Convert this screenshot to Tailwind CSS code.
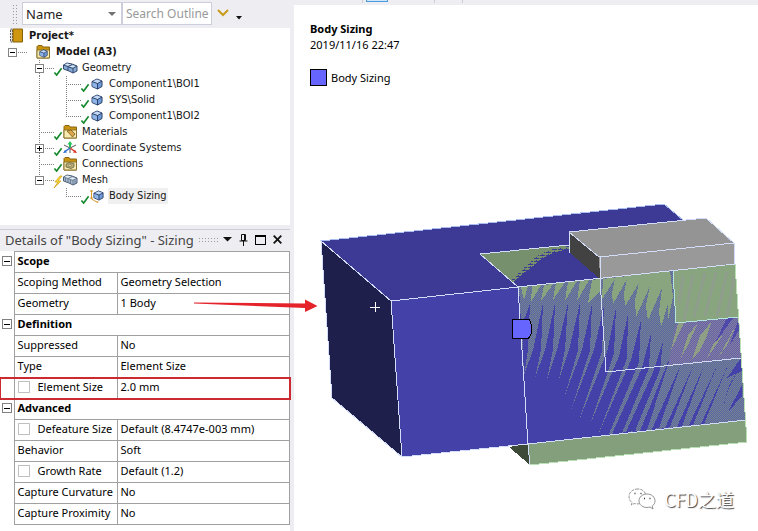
<!DOCTYPE html>
<html lang="en">
<head>
<meta charset="utf-8">
<title>Project - Body Sizing</title>
<script src="https://cdn.jsdelivr.net/npm/@tailwindcss/browser@4"></script>
</head>
<body class="bg-white text-black font-['Noto_Sans','Open_Sans',sans-serif]">
<svg class="hidden" aria-hidden="true">
  <symbol id="check" viewBox="0 0 10 10"><path d="M1 6l2.500 3L9 1.500" fill="none" stroke="#15892c" stroke-width="1.800"/></symbol>
  <symbol id="cube" viewBox="0 0 12 12"><path d="M1 3.500 6 1l5 2v5.500L6.500 11 1 8.500z" fill="#6f9bd8" stroke="#2d4269"/><path d="M1.500 3.500 6 1.500l4.500 1.700L6.500 5.500z" fill="#c5daf5"/><path d="M6.500 5.500v5L1.500 8.200V4z" fill="#8fb5e8"/><path d="M1 3.500l5.500 2L11 3M6.500 5.500V11" fill="none" stroke="#2d4269"/></symbol>
  <symbol id="cubes" viewBox="0 0 15 12"><path d="M.5 3 4 1l5 1 5 2v5l-4 2-4-2-5.500-2z" fill="#86abd9" stroke="#35496b"/><path d="M1 3.200 4 1.500l4.500 1L5 4.500zM6 5l3-1.700L13.500 4.500 10 6z" fill="#d5e4f6"/><path d="M.5 3 5 4.500V8.500M5 4.500l4-2M5.500 5 10 6.300V11M10 6.300 14 4" fill="none" stroke="#35496b"/></symbol>
  <symbol id="meshes" viewBox="0 0 15 12"><path d="M.5 3 4 1l5 1 5 2v5l-4 2-4-2-5.500-2z" fill="#a9bccf" stroke="#4a5c72"/><path d="M1 3.200 4 1.500l4.500 1L5 4.500zM6 5l3-1.700L13.500 4.500 10 6z" fill="#e3ebf2"/><path d="M.5 3 5 4.500V8.500M5 4.500l4-2M5.500 5 10 6.300V11M10 6.300 14 4M2.500 4v4M7.500 6v4M12 5.500V10" fill="none" stroke="#5d7088" stroke-width=".8"/></symbol>
  <symbol id="folder" viewBox="0 0 15 14"><path d="M1 3V1.500L2 .5h4l1 1.500h6.500V13H1z" fill="#c8930f" stroke="#8a6410"/><path d="M1 5h12.500v8H1z" fill="#f6eab0" stroke="#8a7430"/></symbol>
</svg>

<div class="flex min-h-screen items-stretch bg-[#eeeef2]">
  <aside class="flex w-[290px] shrink-0 flex-col" aria-label="Outline and details">
    <form class="flex h-7 items-start pl-3" aria-label="Outline filter">
      <span class="mt-1 mr-1 h-[20px] w-1.5 bg-[radial-gradient(#9b9ba0_30%,transparent_35%)] bg-[size:3px_3px]"></span>
      <div class="flex h-[23px] w-[100px] items-center border border-[#cccedb] bg-white mt-0.5">
        <select id="by" aria-label="Filter by" class="w-full appearance-none bg-transparent pl-[3px] text-[13px] leading-5 text-[#222]"><option>Name</option></select>
        <svg class="mr-1 h-1 w-[9px] shrink-0" viewBox="0 0 9 4"><path d="M0 0h8L4 4z" fill="#717171"/></svg>
      </div>
      <input id="q" type="text" aria-label="Search Outline" placeholder="Search Outline" class="mt-0.5 h-[23px] w-[90px] border border-[#cccedb] bg-white pl-[3px] text-[12px] text-[#777] placeholder:text-[#999]">
      <button type="button" aria-label="Search" class="mt-2 ml-[5px]"><svg class="h-[9px] w-3" viewBox="0 0 12 9"><path d="M1 2l5 5 5-5" fill="none" stroke="#c99b1d" stroke-width="2"/></svg></button>
      <button type="button" aria-label="More" class="mt-4 ml-[7px]"><svg class="block h-1 w-1.5" viewBox="0 0 6 4"><path d="M0 0h6L3 3.500z" fill="#111"/></svg></button>
    </form>

    <ul class="h-[197px] bg-white text-[11px] leading-4 text-[#161616] font-['DejaVu_Sans_Condensed','Noto_Sans',sans-serif] [&>li]:flex [&>li]:h-4 [&>li]:items-center" aria-label="Outline">
      <li class="font-bold"><svg class="mr-[5px] ml-[9px] h-4 w-[15px]" viewBox="0 0 15 16"><path d="M1.500 1h2v13h-2z" fill="#ddd" stroke="#333" stroke-width=".8" stroke-dasharray="2 1"/><path d="M4 1h9.500v13H4z" fill="#cf970f" stroke="#87600b"/></svg>Project*</li>
      <li class="font-bold">
        <button type="button" aria-label="Collapse Model" class="ml-2 size-[9px] shrink-0 border border-[#848484] bg-white"><svg class="block size-[7px]" viewBox="0 0 7 7"><path d="M1 3h5v1H1z"/></svg></button>
        <svg class="mr-[5px] h-4 w-[34px]" viewBox="17 0 34 16"><path d="M18 8.500h10" stroke="#808080" stroke-dasharray="1 1"/><use href="#folder" x="36" y="1" width="15" height="14"/><use href="#cube" x="39" y="5" width="9" height="9"/></svg>Model (A3)</li>
      <li>
        <svg class="h-4 w-[35px]"></svg>
        <button type="button" aria-label="Collapse Geometry" class="size-[9px] shrink-0 border border-[#848484] bg-white"><svg class="block size-[7px]" viewBox="0 0 7 7"><path d="M1 3h5v1H1z"/></svg></button>
        <svg class="mr-1 h-4 w-[34px] overflow-visible" viewBox="44 0 34 16"><path d="M39.500 0v4M39.500 13v3M45 8.500h9" stroke="#808080" stroke-dasharray="1 1"/><use href="#check" x="53" y="7" width="10" height="9"/><use href="#cubes" x="63" y="2" width="15" height="12"/></svg>Geometry</li>
      <li><svg class="mr-1.5 h-4 w-[103px]" viewBox="0 0 103 16"><path d="M39.500 0v16M66.500 0v16M66 8.500h15" stroke="#808080" stroke-dasharray="1 1"/><use href="#check" x="80" y="7" width="10" height="9"/><use href="#cube" x="91" y="2" width="12" height="12"/></svg>Component1\BOI1</li>
      <li><svg class="mr-1.5 h-4 w-[103px]" viewBox="0 0 103 16"><path d="M39.500 0v16M66.500 0v16M66 8.500h15" stroke="#808080" stroke-dasharray="1 1"/><use href="#check" x="80" y="7" width="10" height="9"/><use href="#cube" x="91" y="2" width="12" height="12"/></svg>SYS\Solid</li>
      <li><svg class="mr-1.5 h-4 w-[103px]" viewBox="0 0 103 16"><path d="M39.500 0v16M66.500 0v8M66 8.500h15" stroke="#808080" stroke-dasharray="1 1"/><use href="#check" x="80" y="7" width="10" height="9"/><use href="#cube" x="91" y="2" width="12" height="12"/></svg>Component1\BOI2</li>
      <li><svg class="mr-1 h-4 w-[78px]" viewBox="0 0 78 16"><path d="M39.500 0v16M39 8.500h15" stroke="#808080" stroke-dasharray="1 1"/><use href="#check" x="53" y="7" width="10" height="9"/><use href="#folder" x="63" y="1" width="15" height="14"/><path d="M67 7l4-1 4 4-2.500 3z" fill="#d9a64c" stroke="#7a5a20" stroke-width=".8"/></svg>Materials</li>
      <li>
        <svg class="h-4 w-[35px]"></svg>
        <button type="button" aria-label="Expand Coordinate Systems" class="size-[9px] shrink-0 border border-[#848484] bg-white"><svg class="block size-[7px]" viewBox="0 0 7 7"><path d="M1 3h5v1H1zM3 1h1v5H3z"/></svg></button>
        <svg class="mr-1 h-4 w-[34px] overflow-visible" viewBox="44 0 34 16"><path d="M39.500 0v4M39.500 13v3M45 8.500h9" stroke="#808080" stroke-dasharray="1 1"/><use href="#check" x="53" y="7" width="10" height="9"/><path d="M70 8V4" stroke="#25c058" stroke-width="2"/><path d="M67.500 4.500 70 1l2.500 3.500z" fill="#25c058"/><path d="M70 8l5 3.500" stroke="#d93025" stroke-width="1.500"/><path d="M77 13l-4-.5 2-2.500z" fill="#d93025"/><path d="M70 8l-5 3.500" stroke="#2a6fd0" stroke-width="1.500"/><path d="M63 13l4-.5-2-2.500z" fill="#2a6fd0"/><path d="M64 5l5 2.500M76 5l-5 2.500M70 9v4" stroke="#555"/></svg>Coordinate Systems</li>
      <li><svg class="mr-1 h-4 w-[78px]" viewBox="0 0 78 16"><path d="M39.500 0v16M39 8.500h15" stroke="#808080" stroke-dasharray="1 1"/><use href="#check" x="53" y="7" width="10" height="9"/><use href="#folder" x="63" y="1" width="15" height="14"/><path d="M66 8l3-1.500 5 1V11l-3 1.500-5-1.500z" fill="#b5ab78" stroke="#6b6440" stroke-width=".8"/><circle cx="70" cy="9.500" r="1.200" fill="#f6eab0" stroke="#6b6440" stroke-width=".6"/></svg>Connections</li>
      <li>
        <svg class="h-4 w-[35px]"></svg>
        <button type="button" aria-label="Collapse Mesh" class="size-[9px] shrink-0 border border-[#848484] bg-white"><svg class="block size-[7px]" viewBox="0 0 7 7"><path d="M1 3h5v1H1z"/></svg></button>
        <svg class="mr-1 h-4 w-[34px] overflow-visible" viewBox="44 0 34 16"><path d="M39.500 0v4M45 8.500h9" stroke="#808080" stroke-dasharray="1 1"/><path d="M60 4l-5 6h3l-4 6 7-7h-3l4-5z" fill="#ffe23a" stroke="#c9970c" stroke-width=".7"/><use href="#meshes" x="63" y="2" width="15" height="12"/></svg>Mesh</li>
      <li><svg class="mr-1 h-4 w-[104px]" viewBox="0 0 104 16"><path d="M66.500 0v8M66 8.500h15" stroke="#808080" stroke-dasharray="1 1"/><use href="#check" x="80" y="7" width="10" height="9"/><path d="M91.500 2v9l6 3.500M90 3h3M90 10h3M97 13l1 2" stroke="#d69a2c" fill="none"/><use href="#cube" x="93" y="2" width="11" height="11"/></svg><span class="bg-[#f0f0f0] px-px">Body Sizing</span></li>
    </ul>

    <section class="mt-1 flex grow flex-col" aria-label="Details">
      <header class="flex h-[22px] items-center border-t border-[#cccedb] pl-[5px] pr-2 pb-0.5 text-[#444]">
        <h2 class="text-[13px] leading-5 whitespace-nowrap">Details of "Body Sizing" - Sizing</h2>
        <span class="mx-1 h-1.5 grow bg-[radial-gradient(#9b9ba0_30%,transparent_35%)] bg-[size:3px_3px]"></span>
        <div class="flex items-center gap-[7px]">
          <button type="button" aria-label="Menu"><svg class="block h-[5px] w-[9px]" viewBox="0 0 9 5"><path d="M0 0h9L4.500 4.500z" fill="#111"/></svg></button>
          <button type="button" aria-label="Pin"><svg class="block h-3 w-[9px]" viewBox="0 0 9 12"><path d="M2.500.500h4v6h-4zM5.500.500v6M.5 7h8M4.500 7v5" fill="none" stroke="#111"/></svg></button>
          <button type="button" aria-label="Maximize" class="block h-2.5 w-[11px] border border-t-2 border-black"></button>
          <button type="button" aria-label="Close"><svg class="block size-[9px]" viewBox="0 0 9 9"><path d="M.7.700l7.600 7.600M8.300.700.700 8.300" stroke="#111" stroke-width="1.800"/></svg></button>
        </div>
      </header>
      <div class="grow bg-white">
      <table class="w-full table-fixed border-collapse text-left text-[11px] leading-4 whitespace-nowrap [&_tr]:h-[21px] [&_th]:border [&_th]:border-[#a0a0a0] [&_th]:p-0 [&_th]:pb-0.5 [&_th]:pl-[3px] [&_th]:font-normal [&_td]:p-0 [&_td]:pb-0.5 [&_td+td]:border [&_td+td]:border-[#a0a0a0] [&_th+td]:border [&_th+td]:border-[#a0a0a0] [&_th+td]:pl-[3px]">
        <colgroup><col class="w-[14px]"><col class="w-[103px]"><col></colgroup>
        <tbody>
        <tr><td><button type="button" aria-label="Collapse Scope" class="ml-0.5 block size-[10px] border border-[#808080]"><svg class="block size-2" viewBox="0 0 8 8"><path d="M1 4h6v1H1z"/></svg></button></td><th colspan="2" scope="rowgroup"><b>Scope</b></th></tr>
        <tr><td></td><th scope="row">Scoping Method</th><td>Geometry Selection</td></tr>
        <tr><td></td><th scope="row">Geometry</th><td>1 Body</td></tr>
        <tr><td><button type="button" aria-label="Collapse Definition" class="ml-0.5 block size-[10px] border border-[#808080]"><svg class="block size-2" viewBox="0 0 8 8"><path d="M1 4h6v1H1z"/></svg></button></td><th colspan="2" scope="rowgroup"><b>Definition</b></th></tr>
        <tr><td></td><th scope="row">Suppressed</th><td>No</td></tr>
        <tr><td></td><th scope="row">Type</th><td>Element Size</td></tr>
        <tr class="outline-2 -outline-offset-1 outline-[#cb2a30]"><td></td><th scope="row"><label class="flex items-center gap-2"><input type="checkbox" class="size-3 shrink-0 appearance-none border border-[#c0c0c0] bg-white">Element Size</label></th><td>2.0 mm</td></tr>
        <tr><td><button type="button" aria-label="Collapse Advanced" class="ml-0.5 block size-[10px] border border-[#808080]"><svg class="block size-2" viewBox="0 0 8 8"><path d="M1 4h6v1H1z"/></svg></button></td><th colspan="2" scope="rowgroup"><b>Advanced</b></th></tr>
        <tr><td></td><th scope="row"><label class="flex items-center gap-2"><input type="checkbox" class="size-3 shrink-0 appearance-none border border-[#c0c0c0] bg-white">Defeature Size</label></th><td>Default (8.4747e-003 mm)</td></tr>
        <tr><td></td><th scope="row">Behavior</th><td>Soft</td></tr>
        <tr><td></td><th scope="row"><label class="flex items-center gap-2"><input type="checkbox" class="size-3 shrink-0 appearance-none border border-[#c0c0c0] bg-white">Growth Rate</label></th><td>Default (1.2)</td></tr>
        <tr><td></td><th scope="row">Capture Curvature</th><td>No</td></tr>
        <tr><td></td><th scope="row">Capture Proximity</th><td>No</td></tr>
        </tbody>
      </table>
      </div>
    </section>
  </aside>

  <main class="relative flex min-w-0 grow flex-col pl-1">
    <div class="flex h-[5px] items-start pl-[68px]">
      <span class="h-[3px] w-px bg-[#cccedb]"></span>
      <span class="ml-[3px] h-0.5 w-[22px] border border-t-0 border-[#4a9be0] bg-[#cfe6fa]"></span>
      <span class="ml-[46px] h-[3px] w-px bg-[#cccedb]"></span>
      <span class="ml-[27px] h-[3px] w-px bg-[#cccedb]"></span>
    </div>
    <div class="relative grow bg-white">
      <svg class="block w-full" viewBox="294 5 464 526" shape-rendering="crispEdges" role="img" aria-label="Meshed solid with body sizing">
        <defs>
          <pattern id="ck" width="4" height="4" patternUnits="userSpaceOnUse" shape-rendering="auto"><rect width="4" height="4" fill="#5862a2"/><path d="M0 0h1v1H0zM1 1h1v1H1zM2 0h1v1H2zM3 1h1v1H3zM0 2h1v1H0zM1 3h1v1H1zM2 2h1v1H2zM3 3h1v1H3z" fill="#778792"/></pattern>
          <pattern id="ck2" width="4" height="4" patternUnits="userSpaceOnUse" shape-rendering="auto"><rect width="4" height="4" fill="#625fa6"/><path d="M0 0h1v1H0zM1 1h1v1H1zM2 0h1v1H2zM3 1h1v1H3zM0 2h1v1H0zM1 3h1v1H1zM2 2h1v1H2zM3 3h1v1H3z" fill="#8482a0"/></pattern>
          <pattern id="dash" width="6" height="3" patternUnits="userSpaceOnUse"><path d="M0 0h5v1H0zM2 2h1v1H2z" fill="#3c3a94"/></pattern>
        </defs>
        <path d="M321 241 664 204 683 220 600 280 518 288 391 301z" fill="#3c3a94"/>
        <path d="M321 241 391 301 402 457 332 398z" fill="#1e1f4b"/>
        <path d="M391 301 518 287 735 264 746 421 528 444 402 457z" fill="#4441a8"/>
        <path d="M480 254 569 245V249Q545 253 533 266L513 282z" fill="#768f6c"/>
        <path d="M569 246Q540 250 530 262L511 280 515 284 533 275Q542 260 569 252z" fill="url(#dash)"/>
        <path d="M509 447 528 444 530 465z" fill="#3c4a37"/>
        <path d="M528 444 746 420 747 442 530 465z" fill="#849f7b"/>
        <!-- overlap of the two coplanar faces -->
        <path d="M519 287 735 264 746 420 598 435 589 427 580 418 571 410 565 395 559 379 547 380 535 378 524 375z" fill="url(#ck)"/>
        <g fill="#4441a8">
          <path d="M530 304 522 325 524 375 528 350zM543 303 533 350 524 375 535 378 541 350zM555 303 545 350 535 378 547 380 553 350zM568 303 557 350 547 380 559 379 565 350zM580 303 569 350 559 379 565 395 578 350zM592 304 582 350 565 395 571 410 590 350zM604 306 594 350 571 410 580 418 602 352zM616 308 607 352 580 418 589 427 614 354zM628 314 619 356 589 427 598 435 627 358zM641 320 631 360 598 435 609 434 639 362zM651 333 642 368 612 434 622 433 649 368zM663 341 654 370 626 432 635 431 660 370zM672 352 640 431 647 430zM682 362 652 429 659 428zM694 364 665 428 670 427zM704 366 677 427 682 426zM717 366 689 425 693 425zM728 365 701 424 704 424zM741 364 727 392 722 412 729 386zM741 358 742 371 727 378z"/>
          <path d="M742 385 742 396 728 412z"/>
          <!-- blank corner below the shortest streaks -->
          <path d="M524 375 535 378 547 380 559 379 565 395 571 410 580 418 589 427 598 435 528 443z"/>
        </g>
        <path d="M521 287 528 286 524 300zM532 286 541 285 531 302zM544 285 553 284 541 301zM556 283 565 282 553 300zM568 282 577 281 565 301zM580 281 589 280 577 301zM592 280 600 279 601 290 588 303zM603 279 670 271 673 297 668 320 668 298 672 290 661 327 659 312 662 288 648 320 646 306 650 286 636 317 635 300 639 283 625 306 624 294 627 279 613 304 612 293 615 279 602 299z" fill="#88a57f"/>
        <path d="M676 323 739 317 741 358 668 366z" fill="url(#ck2)"/>
        <path d="M684 323 678 323 671 350zM698 323 688 335 681 358 688 345zM712 321 700 336 692 360 700 350 707 336zM724 333 714 343 706 360zM736 325 727 345 718 358z" fill="#8f9f86"/>
        <path d="M727 318 733 318 715 343zM738 320 739 330 730 345z" fill="#4d48aa"/>
        <path d="M673 271 735 264 739 317 676 323z" fill="#88a57f"/>
        <path d="M683 276 679 303M693 275 684 320M705 273 694 317M716 272 705 316M727 272 717 316M734 277 727 316" stroke="#8f9d8c" stroke-width="3"/>
        <path d="M569 232 706 218 734 243 599 257z" fill="#949494"/>
        <path d="M569 232 599 257 600 279 569 252z" fill="#424242"/>
        <path d="M599 257 734 243 735 264 600 279z" fill="#999"/>
        <g fill="none" stroke="#d3ddf7">
          <path d="M321 241 664 204 683 220" stroke="#a9bdef"/>
          <path d="M332 398 321 241 391 301 518 287 735 264M391 301 402 457 528 444 746 420M332 398 402 457M518 287 528 444 530 465M518 287 480 254 569 245M600 257V279L606 372 741 358"/>
          <path d="M569 253V232L599 257 734 243M569 232 706 218 734 243V264"/>
          <path d="M673 271 676 323 739 317" stroke="#b5e3df"/>
          <path d="M735 264 747 442 530 465" stroke="#b9dfb4"/>
        </g>
        <path d="M375.500 302v10M370 307.500h10" stroke="#fff"/>
        <path d="M512.500 319.500h17l2 6v8l-3 5h-16z" fill="#6666ff" stroke="#000"/>
      </svg>
      <div class="absolute top-4 left-4 text-[11px] leading-4">
        <h1 class="font-bold">Body Sizing</h1>
        <p>2019/11/16 22:47</p>
        <p class="mt-4 flex items-center gap-1"><span class="size-[17px] border border-black bg-[#6666ff]"></span>Body Sizing</p>
      </div>
      <div class="absolute right-6 bottom-4 flex items-center gap-2 font-['Noto_Sans_CJK_SC',sans-serif] text-[18px] leading-8 text-white [text-shadow:1px_1px_1px_#444]">
        <svg class="h-[22px] w-7" viewBox="0 0 28 22" fill="#fff" stroke="#777" stroke-width=".8"><path stroke-dasharray="3 1" d="M10 1C5 1 1 4 1 8.500c0 2.500 1 4.500 3 6L3.500 17l3-1.500c4 1 8 0 10-2.500s2-6 0-9C15 2 12.500 1 10 1z"/><path d="M19 6c-4.500 0-8 3-8 6.800s3.500 6.700 8 6.700c1 0 2-.2 3-.5l3 2-.8-3c2-1.500 2.800-3 2.800-5.200C27 9 23.500 6 19 6z"/><path d="M6.500 5.500h1M12.500 5.500h1M16 10.500h1M21.500 10.500h1" stroke="#333" stroke-width="1.500"/></svg>
        <span>CFD之道</span>
      </div>
    </div>
    <svg class="absolute top-[298px] -left-24 h-4 w-[124px]" viewBox="194 298 124 16" aria-hidden="true"><path d="M194 302.500 305 303.500V299.500L317.500 306 305 312V308L194 303.500z" fill="#e4232b"/></svg>
  </main>
</div>
</body>
</html>
